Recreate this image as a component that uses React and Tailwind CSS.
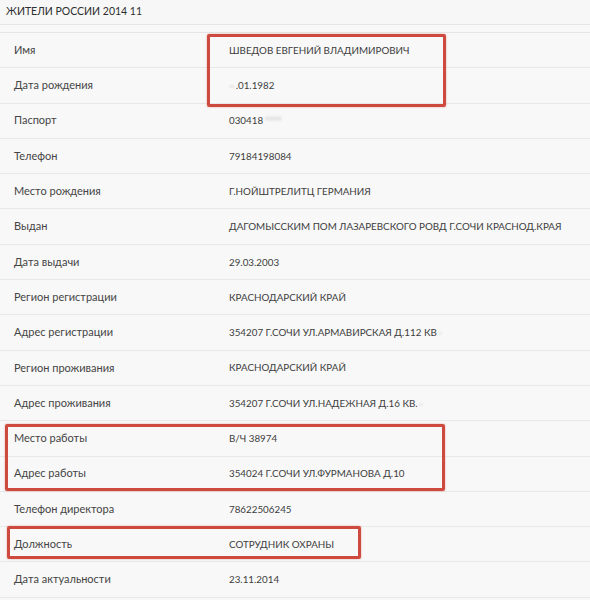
import React from 'react';

const rows = [
  { label: 'Имя', value: 'ШВЕДОВ ЕВГЕНИЙ ВЛАДИМИРОВИЧ' },
  { label: 'Дата рождения', value: '.01.1982', blurBefore: '12' },
  { label: 'Паспорт', value: '030418', blurAfter: '1234' },
  { label: 'Телефон', value: '79184198084' },
  { label: 'Место рождения', value: 'Г.НОЙШТРЕЛИТЦ ГЕРМАНИЯ' },
  { label: 'Выдан', value: 'ДАГОМЫССКИМ ПОМ ЛАЗАРЕВСКОГО РОВД Г.СОЧИ КРАСНОД.КРАЯ' },
  { label: 'Дата выдачи', value: '29.03.2003' },
  { label: 'Регион регистрации', value: 'КРАСНОДАРСКИЙ КРАЙ' },
  { label: 'Адрес регистрации', value: '354207 Г.СОЧИ УЛ.АРМАВИРСКАЯ Д.112 КВ', blurAfter: '1' },
  { label: 'Регион проживания', value: 'КРАСНОДАРСКИЙ КРАЙ' },
  { label: 'Адрес проживания', value: '354207 Г.СОЧИ УЛ.НАДЕЖНАЯ Д.16 КВ.', blurAfter: '1' },
  { label: 'Место работы', value: 'В/Ч 38974' },
  { label: 'Адрес работы', value: '354024 Г.СОЧИ УЛ.ФУРМАНОВА Д.10' },
  { label: 'Телефон директора', value: '78622506245' },
  { label: 'Должность', value: 'СОТРУДНИК ОХРАНЫ' },
  { label: 'Дата актуальности', value: '23.11.2014' },
];

export default function App() {
  return (
    <div className="relative w-[590px] h-[600px] overflow-hidden bg-[#f8f8f8] text-[#3d3d3d] font-['Lato','Open_Sans',sans-serif]">
      {/* Header */}
      <div className="h-[25px] flex items-center px-[6px] border-b border-[#e6e6e6] text-[#2f2f2f] text-[10.5px] bg-[#f7f7f7]">
        ЖИТЕЛИ РОССИИ 2014 11
      </div>
      <div className="h-[8px] border-b border-[#e6e6e6]" />

      {/* Table rows */}
      <div>
        {rows.map((r) => (
          <div key={r.label} className="h-[35.3px] flex items-center border-b border-[#e8e8e8]">
            <div className="w-[229px] pl-[14px] shrink-0 text-[11px] text-[#444]">{r.label}</div>
            <div className="flex items-center whitespace-nowrap text-[9.8px]">
              {r.blurBefore && <span className="blur-[1.2px] text-[#aaa] mr-[1px]">–</span>}
              <span>{r.value}</span>
              {r.blurAfter && (
                <span className="blur-[1.5px] text-[#a8a8a8] ml-[2px]">{r.blurAfter === '1' ? '·' : '****'}</span>
              )}
            </div>
          </div>
        ))}
      </div>

      {/* Highlight boxes */}
      <div className="absolute left-[207px] top-[34px] w-[239px] h-[73px] border-[3px] border-[#cf4a3e] rounded-[2px] shadow-[0_0_2px_rgba(207,74,62,0.5)]" />
      <div className="absolute left-[5px] top-[424px] w-[440px] h-[67px] border-[3px] border-[#cf4a3e] rounded-[2px] shadow-[0_0_2px_rgba(207,74,62,0.5)]" />
      <div className="absolute left-[7px] top-[526px] w-[354px] h-[33px] border-[3px] border-[#cf4a3e] rounded-[2px] shadow-[0_0_2px_rgba(207,74,62,0.5)]" />
    </div>
  );
}
